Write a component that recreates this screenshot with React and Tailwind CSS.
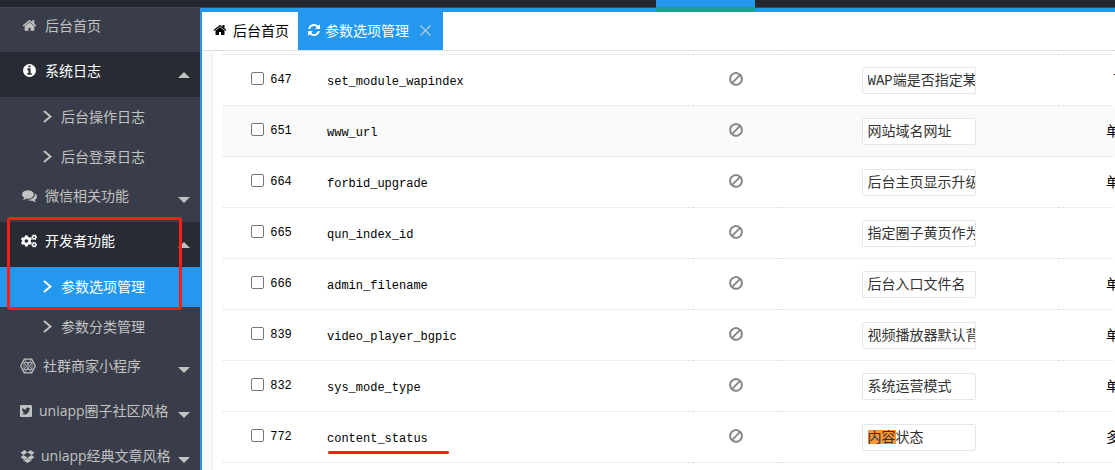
import React from 'react';
import { FaCogs, FaTwitterSquare } from 'react-icons/fa';

const PATHS = {
    home: 'M1472 992v480q0 26-19 45t-45 19h-384v-384h-256v384h-384q-26 0-45-19t-19-45v-480q0-1 .5-3t.5-3l575-474 575 474q1 2 1 6zm223-69l-62 74q-8 9-21 11h-3q-13 0-21-7l-692-577-692 577q-12 8-24 7-13-2-21-11l-62-74q-8-10-7-23.5t11-21.5l719-599q32-26 76-26t76 26l244 204v-195q0-14 9-23t23-9h192q14 0 23 9t9 23v408l219 182q10 8 11 21.5t-7 23.5z',
    info: 'M1152 1376v-160q0-14-9-23t-23-9h-96v-512q0-14-9-23t-23-9h-320q-14 0-23 9t-9 23v160q0 14 9 23t23 9h96v320h-96q-14 0-23 9t-9 23v160q0 14 9 23t23 9h448q14 0 23-9t9-23zm-128-896v-160q0-14-9-23t-23-9h-192q-14 0-23 9t-9 23v160q0 14 9 23t23 9h192q14 0 23-9t9-23zm640 416q0 209-103 385.5t-279.5 279.5-385.5 103-385.5-103-279.5-279.5-103-385.5 103-385.5 279.5-279.5 385.5-103 385.5 103 279.5 279.5 103 385.5z',
    comments: 'M1408 768q0 139-94 257t-256.5 186.5-353.5 68.5q-86 0-176-16-124 88-278 128-36 9-86 16h-3q-11 0-20.5-8t-11.5-21q-1-3-1-6.5t.5-6.5 2-6l2.5-5 3.5-5.5 4-5 4.5-5 4-4.5q5-6 23-25t26-29.5 22.5-29 25-38.5 20.5-44q-124-72-195-177t-71-224q0-139 94-257t256.5-186.5 353.5-68.5 353.5 68.5 256.5 186.5 94 257zm384 256q0 120-71 224.5t-195 176.5q10 24 20.5 44t25 38.5 22.5 29 26 29.5 23 25q1 1 4 4.5t4.5 5 4 5 3.5 5.5l2.5 5 2 6 .5 6.5-1 6.5q-3 14-13 22t-22 7q-50-7-86-16-154-40-278-128-90 16-176 16-271 0-472-132 58 4 88 4 161 0 309-45t264-129q125-92 192-212t67-254q0-77-23-152 129 71 204 178t75 230z',
    refresh: 'M1639 1056q0 5-1 7-64 268-268 434.5t-478 166.5q-146 0-282.5-55t-243.5-157l-129 129q-19 19-45 19t-45-19-19-45v-448q0-26 19-45t45-19h448q26 0 45 19t19 45-19 45l-137 137q71 66 161 102t187 36q134 0 250-65t186-179q11-17 53-117 8-23 30-23h192q13 0 22.5 9.5t9.5 22.5zm25-800v448q0 26-19 45t-45 19h-448q-26 0-45-19t-19-45 19-45l138-138q-148-137-349-137-134 0-250 65t-186 179q-11 17-53 117-8 23-30 23h-199q-13 0-22.5-9.5t-9.5-22.5v-7q65-268 270-434.5t480-166.5q146 0 284 55.5t245 156.5l130-129q19-19 45-19t45 19 19 45z',
    ban: 'M1440 893q0-161-87-295l-754 753q137 89 297 89 111 0 211.5-43.5t173.5-116.5 116-174.5 43-212.5zm-999 299l755-754q-135-91-300-91-148 0-273 73t-198 199-73 274q0 162 89 299zm1223-299q0 157-61 300t-163.5 246-245 164-298.5 61-298.5-61-245-164-163.5-246-61-300 61-299.5 163.5-245.5 245-164 298.5-61 298.5 61 245 164 163.5 245.5 61 299.5z',
    dropbox: 'M402 829L896 1134L554 1419L64 1100zM554 238L896 523L402 827L64 557zM1240 238L1730 557L1392 827L898 523zM1392 829L1730 1100L1240 1419L898 1134zM1390 1384V1492L897 1785L404 1492V1384L551 1480L897 1192L1243 1480z',
};

const Icon = ({ name, className }) => (
    <svg viewBox="0 0 1792 1792" fill="currentColor" aria-hidden="true" className={className}>
        <path d={PATHS[name]} />
    </svg>
);

const HexIcon = () => (
    <svg viewBox="0 0 16 16" fill="none" stroke="currentColor" aria-hidden="true" className="size-4">
        <path strokeWidth="1.3" d="M4.3 1.2h7.4L15.3 8l-3.6 6.8H4.3L0.7 8z" />
        <path strokeWidth="0.8" d="M4.3 1.2L12 11.5M11.7 1.2L4 11.5M4.3 14.8L12 4.5M11.7 14.8L4 4.5M4 4.5h8v7H4z" />
    </svg>
);

const MENU = [
    { label: '后台首页', icon: <Icon name="home" className="size-[15px]" />, slot: 'w-[18px]' },
    {
        label: '系统日志',
        icon: <Icon name="info" className="size-[15px]" />,
        slot: 'w-[18px]',
        open: true,
        children: [{ label: '后台操作日志' }, { label: '后台登录日志' }],
    },
    { label: '微信相关功能', icon: <Icon name="comments" className="size-[15px]" />, slot: 'w-[18px]', more: true },
    {
        label: '开发者功能',
        icon: <FaCogs className="size-4" />,
        slot: 'w-[18px]',
        open: true,
        marked: true,
        children: [{ label: '参数选项管理', active: true }, { label: '参数分类管理' }],
    },
    { label: '社群商家小程序', icon: <HexIcon />, slot: 'w-4', more: true },
    { label: 'uniapp圈子社区风格', icon: <FaTwitterSquare className="h-[14px] w-3" />, slot: 'w-3', more: true },
    { label: 'uniapp经典文章风格', icon: <Icon name="dropbox" className="size-[15px] shrink-0" />, slot: 'w-[14px]', more: true },
];

const ROWS = [
    { id: 647, name: 'set_module_wapindex', title: 'WAP端是否指定某个页面', type: '下拉框' },
    { id: 651, name: 'www_url', title: '网站域名网址', type: '单行文本', hover: true },
    { id: 664, name: 'forbid_upgrade', title: '后台主页显示升级提示', type: '单行文本' },
    { id: 665, name: 'qun_index_id', title: '指定圈子黄页作为首页', type: '' },
    { id: 666, name: 'admin_filename', title: '后台入口文件名', type: '单行文本' },
    { id: 839, name: 'video_player_bgpic', title: '视频播放器默认背景图', type: '单行文本' },
    { id: 832, name: 'sys_mode_type', title: '系统运营模式', type: '单行文本' },
    { id: 772, name: 'content_status', title: '内容状态', type: '多行文本', found: true },
];

const Caret = ({ up }) => (
    <svg viewBox="0 0 12 6" fill="currentColor" aria-hidden="true" className="mt-2 ml-auto h-[6px] w-3 shrink-0 text-[#c2c2c2]">
        <path d={up ? 'M0 6L6 0L12 6z' : 'M0 0H12L6 6z'} />
    </svg>
);

const MenuGroup = ({ item }) => (
    <li className="relative">
        <a
            href="#"
            className={`flex h-[45px] items-center gap-[7px] pr-[10px] pb-2 pl-5 ${item.open ? 'bg-[#282b33] text-white' : 'text-[#c2c2c2]'}`}
        >
            <span className={`flex shrink-0 items-center justify-center ${item.slot}`}>{item.icon}</span>
            <span className="whitespace-nowrap">{item.label}</span>
            {(item.open || item.more) && <Caret up={item.open} />}
        </a>
        {item.children && (
            <ul>
                {item.children.map((child) => (
                    <li key={child.label}>
                        <a
                            href="#"
                            className={`flex h-10 items-center gap-[9px] pb-[2px] pl-[43px] ${child.active ? 'bg-[#2398ee] text-white' : 'text-[#c2c2c2]'}`}
                        >
                            <svg viewBox="0 0 9 13" fill="none" stroke="currentColor" strokeWidth="2" aria-hidden="true" className="h-[13px] w-[9px]">
                                <path d="M1 1L7.5 6.5L1 12" />
                            </svg>
                            <span>{child.label}</span>
                        </a>
                    </li>
                ))}
            </ul>
        )}
        {/* red marker around the group title and its first entry */}
        {item.marked && (
            <span className="pointer-events-none absolute -top-[5px] left-[7px] h-[93px] w-[175px] rounded-[3px] border-3 border-[#fe1d12]" />
        )}
    </li>
);

const OptionRow = ({ row }) => (
    <tr className={`h-[51px] ${row.hover ? 'bg-[#fafafa]' : 'bg-white'}`}>
        <td className="border-b border-dotted border-[#dcdcdc]">
            <label className="flex items-center justify-center gap-[6px]">
                <input
                    type="checkbox"
                    className="mb-[3px] size-[13px] appearance-none rounded-[2px] border border-[#767676] bg-white checked:bg-[#2398ee]"
                />
                <span className="text-[12px]">{row.id}</span>
            </label>
        </td>
        <td className="border-b border-dotted border-[#dcdcdc] pt-[3px] pl-[7px] text-[12px]">
            <span className="relative">
                {row.name}
                {row.found && <span className="absolute top-[19px] left-[1px] h-[3px] w-[121px] rounded-full bg-[#fe1d12]" />}
            </span>
        </td>
        <td className="border-b border-dotted border-[#dcdcdc] pb-[2px]">
            <button type="button" aria-label="启用" className="mx-auto block text-[#888]">
                <Icon name="ban" className="size-4" />
            </button>
        </td>
        <td className="border-b border-dotted border-[#dcdcdc]">
            <div className="relative mx-auto h-[27px] w-[114px] bg-white">
                {row.found && <span className="absolute top-[6px] left-[6px] h-[14px] w-7 bg-[#ff9632]" />}
                <input
                    type="text"
                    aria-label={row.name}
                    defaultValue={row.title}
                    className="relative block h-full w-full rounded-[2px] border border-[#e6e6e6] bg-transparent pb-[2px] pl-[5px] text-[14px] text-[#333]"
                />
            </div>
        </td>
        <td className="border-b border-dotted border-[#dcdcdc] pt-[2px] text-center text-[14px]">{row.type}</td>
    </tr>
);

const App = () => (
    <div className="flex h-screen flex-col overflow-hidden bg-[#393d49] font-['Open_Sans','Noto_Sans_CJK_SC',sans-serif] text-[14px]">
        <header className="relative h-2 shrink-0 border-b border-[#42454f] bg-[#23262e]">
            <span className="absolute top-0 left-[656px] z-10 h-3 w-[99px] border-b-5 border-[#1fa094] bg-[#2398ee]" />
        </header>
        <div className="flex min-h-0 flex-1">
            <nav className="w-[200px] shrink-0 overflow-hidden">
                <ul className="-mt-px">
                    {MENU.map((item) => (
                        <MenuGroup key={item.label} item={item} />
                    ))}
                </ul>
            </nav>
            <main className="flex min-w-0 flex-1 flex-col border-t-4 border-l-2 border-[#2398ee] bg-white">
                <div className="flex h-[39px] shrink-0 border-b border-[#e0e0e0]">
                    <button type="button" className="flex items-center gap-[6px] pr-[9px] pb-[2px] pl-[11px] text-black">
                        <Icon name="home" className="size-[14px]" />
                        后台首页
                    </button>
                    <div className="flex items-center bg-[#2398ee] pr-3 pb-[2px] pl-[9px] text-white">
                        <button type="button" className="flex items-center gap-1">
                            <Icon name="refresh" className="size-[14px]" />
                            参数选项管理
                        </button>
                        <button type="button" aria-label="关闭" className="ml-[11px] text-[#b9c9d6]">
                            <svg viewBox="0 0 11 11" stroke="currentColor" strokeWidth="1.2" aria-hidden="true" className="size-[11px]">
                                <path d="M0.5 0.5L10.5 10.5M10.5 0.5L0.5 10.5" />
                            </svg>
                        </button>
                    </div>
                </div>
                <div className="min-h-0 flex-1 overflow-hidden bg-[#f9f9f9] pl-[10px]">
                    <div className="h-full border-l border-[#eee] bg-white pl-[10px]">
                        <table className="w-full min-w-[987px] table-fixed border-separate border-spacing-0 font-['Liberation_Mono','Noto_Sans_CJK_SC',monospace] text-black">
                            <colgroup>
                                <col className="w-[97px]" />
                                <col />
                                <col className="w-[86px]" />
                                <col className="w-[279px]" />
                                <col className="w-[152px]" />
                            </colgroup>
                            <thead>
                                <tr className="h-1">
                                    <th className="border-b border-dotted border-[#dcdcdc] p-0" />
                                    <th className="border-b border-dotted border-[#dcdcdc] p-0" />
                                    <th className="border-b border-dotted border-[#dcdcdc] p-0" />
                                    <th className="border-b border-dotted border-[#dcdcdc] p-0" />
                                    <th className="border-b border-dotted border-[#dcdcdc] p-0" />
                                </tr>
                            </thead>
                            <tbody>
                                {ROWS.map((row) => (
                                    <OptionRow key={row.id} row={row} />
                                ))}
                            </tbody>
                        </table>
                    </div>
                </div>
            </main>
        </div>
    </div>
);

export default App;
